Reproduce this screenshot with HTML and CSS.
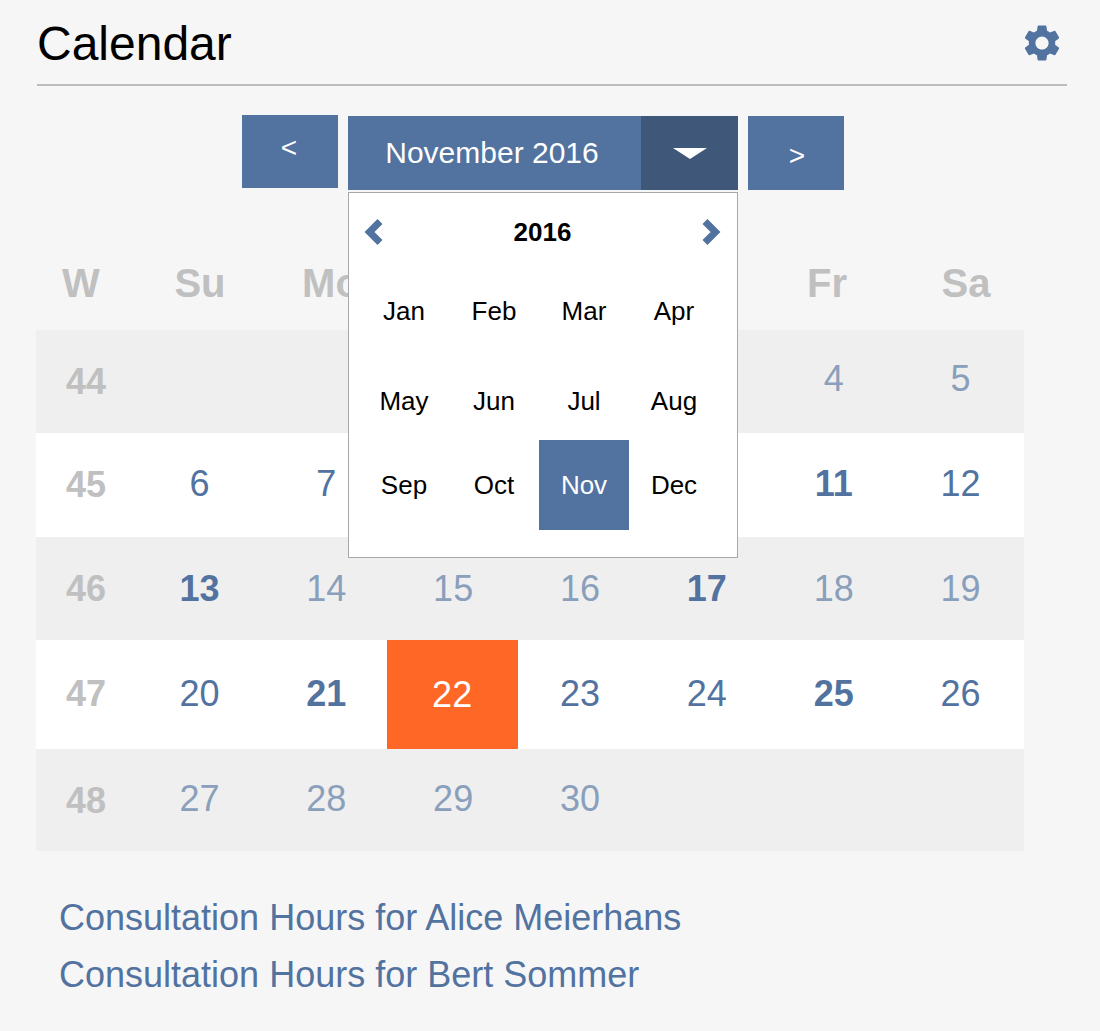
FILE: index.html
```html
<!DOCTYPE html>
<html lang="en">
<head>
  <meta charset="UTF-8" />
  <title>Calendar</title>
  <link rel="stylesheet" href="styles.css">
</head>
<body>
  <header class="top">
    <h1>Calendar</h1>
    <svg class="gear" viewBox="0 0 24 24"><path d="M19.14 12.94c.04-.3.06-.61.06-.94 0-.32-.02-.64-.07-.94l2.03-1.58c.18-.14.23-.41.12-.61l-1.92-3.32c-.12-.22-.37-.29-.59-.22l-2.39.96c-.5-.38-1.03-.7-1.62-.94l-.36-2.54c-.04-.24-.24-.41-.48-.41h-3.84c-.24 0-.43.17-.47.41l-.36 2.54c-.59.24-1.13.57-1.62.94l-2.39-.96c-.22-.08-.47 0-.59.22L2.74 8.87c-.12.21-.08.47.12.61l2.03 1.58c-.05.3-.09.63-.09.94s.02.64.07.94l-2.03 1.58c-.18.14-.23.41-.12.61l1.92 3.32c.12.22.37.29.59.22l2.39-.96c.5.38 1.03.7 1.62.94l.36 2.54c.05.24.24.41.48.41h3.84c.24 0 .44-.17.47-.41l.36-2.54c.59-.24 1.13-.56 1.62-.94l2.39.96c.22.08.47 0 .59-.22l1.92-3.32c.12-.22.07-.47-.12-.61l-2.01-1.58zM12 15.6c-1.98 0-3.6-1.62-3.6-3.6s1.62-3.6 3.6-3.6 3.6 1.62 3.6 3.6-1.62 3.6-3.6 3.6z"/></svg>
  </header>

  <div class="month-nav">
    <button class="step prev">&lt;</button>
    <div class="month-select">
      <span class="month-name">November 2016</span>
      <span class="month-toggle"><span class="caret"></span></span>

      <div class="picker">
        <div class="picker-head">
          <svg class="chevron" viewBox="0 0 20 28"><polyline points="17,3.5 6.5,14 17,24.5"/></svg>
          <strong>2016</strong>
          <svg class="chevron" viewBox="0 0 20 28"><polyline points="3,3.5 13.5,14 3,24.5"/></svg>
        </div>
        <div class="picker-months">
          <span>Jan</span><span>Feb</span><span>Mar</span><span>Apr</span>
          <span class="shift">May</span><span class="shift">Jun</span><span class="shift">Jul</span><span class="shift">Aug</span>
          <span>Sep</span><span>Oct</span><span class="picked">Nov</span><span>Dec</span>
        </div>
      </div>
    </div>
    <button class="step next">&gt;</button>
  </div>

  <!-- Tu, We and Th sit under the picker -->
  <div class="weekdays">
    <span class="wk-head">W</span><span>Su</span><span>Mo</span><span></span><span></span><span></span><span>Fr</span><span>Sa</span>
  </div>

  <div class="weeks">
    <div class="week alt r1">
      <span class="wk">44</span><span></span><span></span><span></span><span></span><span></span><span>4</span><span>5</span>
    </div>
    <div class="week r2">
      <span class="wk">45</span><span>6</span><span>7</span><span></span><span></span><span></span><span class="has">11</span><span>12</span>
    </div>
    <div class="week alt r3">
      <span class="wk">46</span><span class="has">13</span><span>14</span><span>15</span><span>16</span><span class="has">17</span><span>18</span><span>19</span>
    </div>
    <div class="week r4">
      <span class="wk">47</span><span>20</span><span class="has">21</span><span class="today">22</span><span>23</span><span>24</span><span class="has">25</span><span>26</span>
    </div>
    <div class="week alt r5">
      <span class="wk">48</span><span>27</span><span>28</span><span>29</span><span>30</span><span></span><span></span><span></span>
    </div>
  </div>

  <div class="links">
    <a href="#">Consultation Hours for Alice Meierhans</a>
    <a href="#">Consultation Hours for Bert Sommer</a>
  </div>
</body>
</html>
```

FILE: styles.css
```css
* {
  margin: 0;
  padding: 0;
  box-sizing: border-box;
}

body {
  background: #f6f6f6;
  font-family: "Liberation Sans", Arial, sans-serif;
  color: #000;
}

.top {
  height: 86px;
  margin: 0 33px 0 37px;
  border-bottom: 2px solid #bdbdbd;
  display: flex;
  justify-content: space-between;
  align-items: center;
}

.top h1 {
  font-size: 48px;
  font-weight: 400;
  line-height: 80px;
  margin-top: 4px;
}

.gear {
  width: 44px;
  height: 44px;
  margin: 2px 3px 0 0;
  fill: #5272a0;
}

.month-nav {
  display: flex;
  align-items: flex-start;
  gap: 10px;
  margin: 30px 0 0 242px;
}

.step {
  width: 96px;
  height: 74px;
  border: none;
  background: #5272a0;
  color: #fff;
  font-family: inherit;
  font-size: 28px;
}

.prev {
  height: 73px;
  margin-top: -1px;
  padding: 0 2px 7px 0;
}

.next {
  padding: 5px 0 0 2px;
}

.month-select {
  position: relative;
  width: 390px;
  height: 74px;
  display: flex;
  color: #fff;
  font-size: 30px;
}

.month-name {
  width: 293px;
  background: #5272a0;
  line-height: 74px;
  text-align: center;
  padding-right: 5px;
}

.month-toggle {
  width: 97px;
  background: #3f5779;
  display: flex;
  justify-content: center;
  align-items: center;
}

.caret {
  width: 0;
  height: 0;
  border-left: 17px solid transparent;
  border-right: 17px solid transparent;
  border-top: 11px solid #fff;
  margin-top: 1px;
}

/* year and month picker, sits on top of the table */
.picker {
  position: absolute;
  top: 76px;
  left: 0;
  z-index: 10;
  width: 390px;
  height: 366px;
  background: #fff;
  border: 1px solid #a8a8a8;
  color: #000;
}

.picker-head {
  display: flex;
  justify-content: space-between;
  align-items: center;
  height: 76px;
  padding: 2px 15px 0 14px;
  font-size: 26px;
}

.chevron {
  width: 20px;
  height: 28px;
  fill: none;
  stroke: #5272a0;
  stroke-width: 7;
}

.picker-months {
  display: grid;
  grid-template-columns: repeat(4, 90px);
  grid-template-rows: 84px 87px 90px;
  margin-left: 10px;
  font-size: 26px;
}

.picker-months span {
  display: flex;
  justify-content: center;
  align-items: center;
}

.picker-months .shift {
  padding-top: 9px;
}

.picker-months .picked {
  background: #5272a0;
  color: #fff;
}

.weekdays {
  display: grid;
  grid-template-columns: 100px 128px 134px 122px 120px 122px 130px 148px;
  margin: 70px 0 0 36px;
  height: 70px;
  font-size: 40px;
  font-weight: 700;
  color: #c0c0c0;
  text-align: center;
  line-height: 46px;
}

.wk-head {
  padding-right: 10px;
}

.weeks {
  width: 988px;
  margin-left: 36px;
}

.week {
  display: grid;
  grid-template-columns: 100px repeat(7, 1fr);
  background: #fff;
  font-size: 36px;
  color: #5272a0;
  text-align: center;
}

.week span {
  display: flex;
  justify-content: center;
  align-items: center;
  padding-bottom: 3px;
}

.r1 { height: 103px; }
.r2 { height: 104px; }
.r3 { height: 103px; }
.r4 { height: 109px; }
.r5 { height: 102px; }

.r1 span { padding-bottom: 5px; }
.r3 span { padding-bottom: 0; }
.r4 span { padding-bottom: 1px; }

.week.alt {
  background: #efefef;
  color: #8a9fbb;
}

.week .wk {
  color: #c0c0c0;
  font-weight: 700;
  padding-bottom: 0;
}

.r5 .wk {
  padding-top: 2px;
}

.r4 .wk {
  padding-bottom: 2px;
}

.week .has {
  color: #5272a0;
  font-weight: 700;
}

.week .today {
  background: #ff6726;
  color: #fff;
  margin: 0 -1px 0 -3px;
  padding-bottom: 0;
}

.links {
  margin: 46px 0 0 59px;
  display: flex;
  flex-direction: column;
  gap: 15px;
}

.links a {
  font-size: 36px;
  line-height: 42px;
  color: #5272a0;
  text-decoration: none;
}
```
